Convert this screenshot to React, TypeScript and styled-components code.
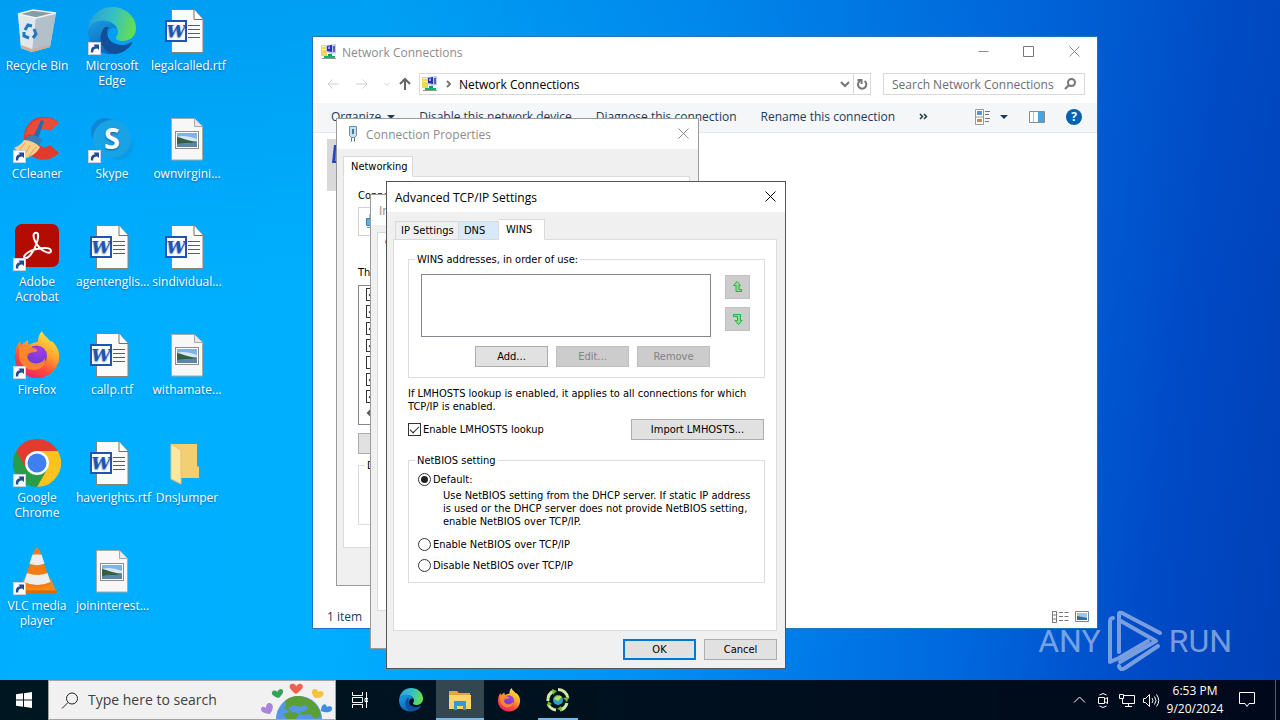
import React from "react";
import styled, { createGlobalStyle, css } from "styled-components";

const SHELL = `"Open Sans", "Noto Sans", sans-serif`;
const DIALOG = `"DejaVu Sans Condensed", "DejaVu Sans", sans-serif`;

const GlobalStyle = createGlobalStyle`
  *, *::before, *::after { box-sizing: border-box; }
  body { margin: 0; font: 12px/15px ${SHELL}; color: #000; }
  button, input { font: inherit; color: inherit; margin: 0; }
  svg { display: block; flex: none; }
`;

/* ---------- Desktop ---------- */

const Screen = styled.div`
  display: flex;
  flex-direction: column;
  height: 100vh;
  overflow: hidden;
`;

const Desktop = styled.main`
  position: relative;
  flex: 1;
  min-height: 0;
  overflow: hidden;
  background:
    linear-gradient(180deg, rgba(0, 84, 190, 0.18) 0%, rgba(0, 90, 200, 0) 45%),
    linear-gradient(97deg, #00aeff 0%, #00b0ff 28%, #0092f5 52%, #0068de 76%, #004ac6 90%, #0040b6 100%);
`;

const IconGrid = styled.ul`
  display: grid;
  grid-auto-flow: column;
  grid-template-rows: repeat(6, 108px);
  grid-auto-columns: 75px;
  width: max-content;
  margin: 0;
  padding: 0;
  list-style: none;
`;

const Shortcut = styled.button`
  display: flex;
  flex-direction: column;
  align-items: center;
  gap: 3px;
  width: 100%;
  padding: 7px 1px 0 0;
  border: 0;
  background: none;
  color: #fff;
  text-align: center;
  text-shadow: 0 1px 2px rgba(0, 50, 110, 0.6);
`;

const ShortcutLabel = styled.span`
  max-width: 72px;
`;

const Brand = styled.div`
  position: absolute;
  right: 48px;
  bottom: 6px;
  display: flex;
  align-items: center;
  gap: 6px;
  color: rgba(200, 214, 238, 0.6);
  font: 32px/66px Roboto, "Liberation Sans", sans-serif;
  pointer-events: none;
`;

/* ---------- Windows ---------- */

const Frame = styled.section<{ $x: number; $y: number; $w: number; $h: number; $edge: string; $dialog?: boolean }>`
  position: absolute;
  isolation: isolate;
  left: ${(p) => p.$x}px;
  top: ${(p) => p.$y}px;
  width: ${(p) => p.$w}px;
  height: ${(p) => p.$h}px;
  display: flex;
  flex-direction: column;
  border: 1px solid ${(p) => p.$edge};
  background: #fff;
  ${(p) =>
    p.$dialog &&
    css`
      background: #f0f0f0;
      font: 11px/13px ${DIALOG};
    `}
`;

const TitleBar = styled.header<{ $active?: boolean }>`
  display: flex;
  align-items: center;
  flex: none;
  gap: 5px;
  height: 30px;
  padding-left: 8px;
  background: #fff;
  color: ${(p) => (p.$active ? "#000" : "#8c8c8c")};
  font: 12px/15px ${SHELL};
`;

const Title = styled.h2`
  flex: 1;
  margin: 0;
  font: inherit;
  white-space: nowrap;
`;

const CaptionButtons = styled.div`
  display: flex;
`;

const CaptionButton = styled.button<{ $w: number }>`
  display: grid;
  place-items: center;
  width: ${(p) => p.$w}px;
  height: 30px;
  padding: 0 0 2px;
  border: 0;
  background: none;
`;

const AddressRow = styled.div`
  display: flex;
  align-items: center;
  flex: none;
  height: 36px;
  padding: 0 12px 2px 13px;
`;

const NavButton = styled.button<{ $w: number }>`
  display: grid;
  place-items: center;
  width: ${(p) => p.$w}px;
  height: 20px;
  padding: 0;
  border: 0;
  background: none;
`;

const AddressBox = styled.div`
  display: flex;
  align-items: center;
  flex: 1;
  height: 22px;
  margin-right: 12px;
  padding-left: 2px;
  border: 1px solid #d9d9d9;
`;

const Crumb = styled.button`
  flex: 1;
  padding: 0;
  border: 0;
  background: none;
  text-align: left;
`;

const RefreshButton = styled(NavButton)`
  border-left: 1px solid #d9d9d9;
`;

const SearchBox = styled.label`
  display: flex;
  align-items: center;
  width: 202px;
  height: 22px;
  padding: 0 8px;
  border: 1px solid #d9d9d9;
`;

const SearchInput = styled.input`
  flex: 1;
  min-width: 0;
  padding: 0;
  border: 0;
  outline: 0;
  background: none;
  &::placeholder { color: #6d6d6d; opacity: 1; }
`;

const CommandBar = styled.div`
  display: flex;
  align-items: center;
  flex: none;
  gap: 24px;
  height: 30px;
  padding: 0 15px 2px 18px;
  border-bottom: 1px solid #e8e8ea;
  background: #f5f6f7;
`;

const Command = styled.button`
  display: flex;
  align-items: center;
  gap: 6px;
  padding: 0;
  border: 0;
  background: none;
  color: #1e395b;
  white-space: nowrap;
`;

const CommandTools = styled.div`
  display: flex;
  align-items: center;
  gap: 21px;
  margin-left: auto;
`;

const FileArea = styled.div`
  flex: 1;
  padding: 6px 14px;
`;

const ConnectionItem = styled.button`
  display: flex;
  width: 240px;
  height: 52px;
  padding: 6px 4px;
  border: 0;
  background: #d9d9d9;
`;

const StatusBar = styled.footer`
  display: flex;
  align-items: center;
  justify-content: space-between;
  height: 23px;
  padding: 0 8px 0 14px;
  color: #1e395b;
`;

const ViewButtons = styled.div`
  display: flex;
`;

/* ---------- Dialog parts ---------- */

const DialogBody = styled.div<{ $pad: string }>`
  display: flex;
  flex-direction: column;
  flex: 1;
  min-height: 0;
  padding: ${(p) => p.$pad};
`;

const TabList = styled.div<{ $indent?: boolean }>`
  position: relative;
  z-index: 1;
  display: flex;
  align-items: flex-end;
  flex: none;
  height: 21px;
  margin-bottom: -1px;
  padding-left: ${(p) => (p.$indent ? 2 : 0)}px;
`;

const Tab = styled.button<{ $selected?: boolean; $hot?: boolean; $w: number }>`
  width: ${(p) => p.$w}px;
  height: ${(p) => (p.$selected ? 21 : 19)}px;
  padding: 0 0 0 ${(p) => (p.$selected ? 7 : 5)}px;
  border: 1px solid #d9d9d9;
  border-bottom-color: ${(p) => (p.$selected ? "#fff" : "#d9d9d9")};
  background: ${(p) => (p.$selected ? "#fff" : p.$hot ? "#d8eaf9" : "#f0f0f0")};
  text-align: left;
  white-space: nowrap;
  & + & { border-left-width: 0; }
`;

const Page = styled.div<{ $pad: string }>`
  display: flex;
  flex-direction: column;
  flex: 1;
  min-height: 0;
  padding: ${(p) => p.$pad};
  border: 1px solid #dcdcdc;
  background: #fff;
`;

const Group = styled.fieldset<{ $pad: string }>`
  min-width: 0;
  margin: 0;
  padding: ${(p) => p.$pad};
  border: 1px solid #dcdcdc;
`;

const Legend = styled.legend`
  padding: 0 2px;
`;

const AddressesRow = styled.div`
  display: flex;
  gap: 14px;
  padding: 0 8px 0 6px;
`;

const ListBox = styled.div<{ $h: number }>`
  flex: 1;
  height: ${(p) => p.$h}px;
  border: 1px solid #828790;
  background: #fff;
`;

const ArrowStack = styled.div`
  display: flex;
  flex-direction: column;
  gap: 8px;
  padding-top: 1px;
`;

const ArrowButton = styled.button`
  display: grid;
  place-items: center;
  width: 25px;
  height: 24px;
  padding: 0;
  border: 1px solid #bfbfbf;
  background: #ccc;
`;

const ButtonRow = styled.div<{ $pad: string }>`
  display: flex;
  justify-content: flex-end;
  flex: none;
  gap: 8px;
  padding: ${(p) => p.$pad};
`;

const PushButton = styled.button<{ $w: number; $primary?: boolean }>`
  width: ${(p) => p.$w}px;
  height: 21px;
  padding: 0;
  border: ${(p) => (p.$primary ? "2px solid #0078d7" : "1px solid #adadad")};
  background: #e1e1e1;
  text-align: center;
  &:disabled {
    border-color: #bfbfbf;
    background: #ccc;
    color: #838383;
  }
`;

const Paragraph = styled.p`
  margin: 0;
`;

const LookupNote = styled(Paragraph)`
  padding-top: 9px;
`;

const SplitRow = styled.div`
  display: flex;
  align-items: center;
  justify-content: space-between;
  padding: 6px 1px 14px 0;
`;

const Choice = styled.label`
  display: flex;
  align-items: center;
  gap: 2px;
`;

const CheckBox = styled.input`
  appearance: none;
  display: grid;
  place-items: center;
  flex: none;
  width: 13px;
  height: 13px;
  border: 1px solid #333;
  background: #fff;
  &:checked::before {
    content: "";
    width: 9px;
    height: 5px;
    border: solid #222;
    border-width: 0 0 1px 1px;
    transform: translateY(-1px) rotate(-45deg);
  }
`;

const BoldCheckBox = styled(CheckBox)`
  &:checked::before {
    width: 7px;
    height: 4px;
    border-width: 0 0 2px 2px;
  }
`;

const Radio = styled.input`
  appearance: none;
  display: grid;
  place-items: center;
  flex: none;
  width: 13px;
  height: 13px;
  border: 1px solid #333;
  border-radius: 50%;
  background: #fff;
  &:checked::before {
    content: "";
    width: 7px;
    height: 7px;
    border-radius: 50%;
    background: #222;
  }
`;

const RadioHelp = styled.p`
  margin: 3px 0 10px 25px;
  white-space: nowrap;
`;

const RadioStack = styled.div`
  display: flex;
  flex-direction: column;
  gap: 8px;
`;

const RadioSet = styled.div`
  padding-left: 3px;
`;

const AdapterBox = styled.div`
  height: 29px;
  margin: 5px 0 30px;
  padding: 4px 7px;
  border: 1px solid #d0d0d0;
`;

const ItemList = styled.div`
  display: flex;
  flex-direction: column;
  gap: 4px;
  height: 140px;
  margin: 6px 0 8px;
  padding: 2px 7px;
  border: 1px solid #828790;
`;

/* ---------- Taskbar ---------- */

const Taskbar = styled.footer`
  display: flex;
  align-items: stretch;
  flex: none;
  height: 40px;
  background: linear-gradient(90deg, #001722, #000d1c 75%, #00091c);
  color: #fff;
`;

const TaskSearch = styled.label`
  display: flex;
  align-items: center;
  gap: 10px;
  width: 288px;
  padding-left: 12px;
  border: 1px solid #a0a4a6;
  background: #f1f1f1;
  color: #222;
  font: 14px/20px ${SHELL};
`;

const TaskSearchInput = styled(SearchInput)`
  &::placeholder { color: #404040; opacity: 1; }
`;

const AppButtons = styled.div`
  display: flex;
  gap: 1px;
  margin-left: 3px;
`;

const TaskButton = styled.button<{ $active?: boolean; $running?: boolean }>`
  display: flex;
  flex-direction: column;
  align-items: center;
  justify-content: center;
  width: 48px;
  padding: 0;
  border: 0;
  background: ${(p) => (p.$active ? "#34464f" : "none")};
  box-shadow: ${(p) => (p.$active ? "inset 0 -2px #76b9ed" : "none")};
  ${(p) =>
    p.$running &&
    css`
      background: linear-gradient(#76b9ed, #76b9ed) center bottom / 40px 2px no-repeat;
    `}
`;

const Tray = styled.div`
  display: flex;
  align-items: center;
  margin-left: auto;
`;

const TrayButton = styled.button<{ $w: number }>`
  display: grid;
  place-items: center;
  width: ${(p) => p.$w}px;
  height: 40px;
  padding: 0;
  border: 0;
  background: none;
`;

const Clock = styled.time`
  width: 64px;
  text-align: center;
  line-height: 18px;
`;

const ShowDesktop = styled.button`
  width: 5px;
  height: 40px;
  margin-left: 8px;
  padding: 0;
  border: 0;
  border-left: 1px solid #56606a;
  background: none;
`;

/* ---------- Drawings ---------- */

const ShortcutArrow = () => (
  <g>
    <rect x="0.500" y="35.500" width="12" height="12" fill="#fff" stroke="#c9d3df" />
    <path d="M3 45.500c-.6-4 1.200-6.200 4-6.300L5.500 37.500H11V43L9.300 41.500C6.700 41.400 5 42.800 5.200 45.500Z" fill="#244a8f" />
  </g>
);

const Art = ({ children, link }: { children: React.ReactNode; link?: boolean }) => (
  <svg width="48" height="48" viewBox="0 0 48 48" aria-hidden="true">
    {children}
    {link && <ShortcutArrow />}
  </svg>
);

const EdgeShape = () => (
  <g>
    <defs>
      <linearGradient id="edgeTop" x1="0" y1=".3" x2="1" y2=".5">
        <stop offset="0" stopColor="#2c9fd9" />
        <stop offset=".5" stopColor="#35c1c4" />
        <stop offset="1" stopColor="#66e04b" />
      </linearGradient>
      <linearGradient id="edgeLeft" x1="0" y1="0" x2=".6" y2="1">
        <stop offset="0" stopColor="#1b9de2" />
        <stop offset="1" stopColor="#0a62bb" />
      </linearGradient>
    </defs>
    <path d="M.5 22C2 9 11.500 0 24 0c14 0 24 10 24 21 0 8-6 13-13 13-5 0-7.500-2-7-4 .3-1 2-2 2-5 0-6-6-11-14-11C8 14 3 17 .5 22Z" fill="url(#edgeTop)" />
    <path d="M0 24C1.500 17.500 8 13.500 15 13.500c7 0 12 4 14 8-4-2-9 0-9 7 0 9 7 15 15 13-4 4-8 5.500-12 5.500C10 47 0 38 0 24Z" fill="url(#edgeLeft)" />
    <path d="M17 20c-3 3-4.500 7-4.500 11 0 8 6 15 14 16 8-.5 14-5 17.500-10.500.6-1-.3-1.600-1.200-1.100C40 37 37 38 34 38c-8 0-15-5-15-12 0-3 .8-4.500 2-6Z" fill="#124f9b" />
  </g>
);

const FirefoxShape = () => (
  <g>
    <defs>
      <linearGradient id="foxBody" x1=".8" y1="0" x2=".25" y2="1">
        <stop offset="0" stopColor="#fff04a" />
        <stop offset=".4" stopColor="#ffa42b" />
        <stop offset=".7" stopColor="#ff4a3d" />
        <stop offset="1" stopColor="#e81e6e" />
      </linearGradient>
      <radialGradient id="foxGlobe" cx=".6" cy=".2" r=".9">
        <stop offset="0" stopColor="#a63ee0" />
        <stop offset="1" stopColor="#5b3bd0" />
      </radialGradient>
    </defs>
    <path d="M29 0c1 4 6 7 9 11l1-1c5 5 8 11 7 18C45 39 35 47 24 47S3 39 2 28c-.5-7 1-13 5-18l1 4 7-5c0 2 0 4 1 5 3-2 6-3 9-3 0-4 1-8 4-11Z" fill="url(#foxBody)" />
    <circle cx="23.500" cy="25" r="10.500" fill="url(#foxGlobe)" />
    <path d="M6 16c4-3 8-2 10-1l7 3c2 1 1 3-1 3l-5 1c-4 2-3 7 1 9 5 3 12 1 14-4 1 8-5 12-11 12-8 0-14-6-15-13Z" fill="#ff8a2b" opacity=".9" />
  </g>
);

const RecycleArt = () => (
  <Art>
    <path d="M5 7 20 3l23 3-6 34-18 5-11-4Z" fill="#c2d0d9" />
    <path d="m5 7 18 4-4 34-11-4Z" fill="#e1e7ea" />
    <path d="m23 11 20-5-6 34-18 5Z" fill="#b3c0c9" />
    <path d="M5 7 20 3l23 3-20 5Z" fill="#8c9aa5" stroke="#eef3f6" strokeWidth="1.500" />
    <path d="m8 38 11 4 18-4v2l-18 5-11-4Z" fill="#cfae9a" />
    <path d="m12 23 3-5 4 1m2 3 2 5-3 4m-4 0-5-2v-4" fill="none" stroke="#1d78c8" strokeWidth="3" />
  </Art>
);

const EdgeArt = () => <Art link><EdgeShape /></Art>;
const FirefoxArt = () => <Art link><FirefoxShape /></Art>;

const WordArt = () => (
  <Art>
    <path d="M8.500 2.500h22.500l9 10V45.500H8.500Z" fill="#fbfbfb" stroke="#8c8177" />
    <path d="M31 2.500v10h9" fill="#fff" stroke="#7d6e62" />
    <path d="M25 18.500h12M25 22.500h12M25 26.500h12M25 30.500h12" stroke="#2f63b5" />
    <rect x="3" y="14" width="20" height="20" fill="#fff" stroke="#1d55b3" strokeWidth="2" />
    <text x="13" y="30" textAnchor="middle" fontFamily="'DejaVu Serif'" fontWeight="bold" fontStyle="italic" fontSize="17" fill="#1d55b3">W</text>
  </Art>
);

const PictureArt = () => (
  <Art>
    <path d="M8.500 3.500h23l8 8v33.500h-31Z" fill="#f7f7f7" stroke="#a8a8a8" />
    <path d="M31.500 3.500v8h8" fill="#e8e8e8" stroke="#a8a8a8" />
    <rect x="12.500" y="16.500" width="23" height="17" fill="#fff" stroke="#8d8d8d" />
    <rect x="14" y="18" width="20" height="14" fill="#7fb2e6" />
    <path d="M14 22q7-3 20 2v3H14Z" fill="#d7e8f4" />
    <path d="M14 22c4 0 8 4 20 4.500v1L14 29Z" fill="#355e44" />
    <path d="M14 29 34 27.500V32H14Z" fill="#5b86a6" />
  </Art>
);

const CCleanerArt = () => (
  <Art link>
    <path d="M46 8 37 16c-6-5-13-1-13 7s7 12 13 7l9 8c-12 12-32 7-35-9C9 11 20 1 31 2c6 0 12 2 15 6Z" fill="#e23b2b" />
    <path d="M46 8 37 16c-6-5-13-1-13 7-5-6-9-3-12-2C14 6 32-4 46 8Z" fill="#f0604a" opacity=".5" />
    <path d="m28 5 3 1-6 18-5-2Z" fill="#2b6aa8" />
    <path d="M13 23c5-4 12-3 16 2l-4 7-15-5Z" fill="#3b7cb8" />
    <path d="M11 25c6 0 12 3 16 7-3 6-8 9-14 11L1 33c4-2 8-4 10-8Z" fill="#f6cf8b" />
    <path d="m12 28-6 8m11-6-6 11m12-9-7 9" stroke="#dba75b" />
  </Art>
);

const SkypeArt = () => (
  <Art link>
    <circle cx="17" cy="17" r="14" fill="#1086d6" />
    <circle cx="31" cy="31" r="14" fill="#0a9be6" />
    <circle cx="24" cy="24" r="19" fill="#18a3e6" />
    <text x="24" y="34" textAnchor="middle" fontFamily="Open Sans" fontWeight="bold" fontSize="29" fill="#fff">S</text>
  </Art>
);

const AcrobatArt = () => (
  <Art link>
    <rect x="2" y="1" width="44" height="43" rx="7" fill="#b30b00" />
    <path d="M22 10c4-2 4 5 1 12-3 8-8 14-11 13s2-7 12-9c9-2 14-1 14 2s-7 2-12-4c-5-5-7-13-4-14Z" fill="none" stroke="#fff" strokeWidth="2" />
  </Art>
);

const ChromeArt = () => (
  <Art link>
    <path d="M24 24 3.200 12A24 24 0 0 1 44.800 12Z" fill="#e33b2e" />
    <path d="M24 24 44.800 12A24 24 0 0 1 24 48Z" fill="#fcc31e" />
    <path d="M24 24 24 48A24 24 0 0 1 3.200 12Z" fill="#2a9b47" />
    <path d="M24 12h20.800L34.400 30Z" fill="#fcc31e" />
    <path d="M13.600 30 3.200 12 24 12Z" fill="#e33b2e" />
    <path d="M34.400 30 24 48 13.600 30Z" fill="#2a9b47" />
    <circle cx="24" cy="24" r="12" fill="#fff" />
    <circle cx="24" cy="24" r="9.500" fill="#3f7ff0" />
  </Art>
);

const VlcArt = () => (
  <Art link>
    <path d="M11 32h27l6 14H5Z" fill="#f58a1a" />
    <path d="M5 43.500h39V46H5Z" fill="#d96a05" />
    <path d="M22 2q2-2 4 0l12 35q-14 8-28 0Z" fill="#f47c14" />
    <path d="m19 9 .5-1.500h9l3 9q-7.500 3.500-15 0ZM14 26q10 4 20.500 0l3 9q-13 6-26.500 0Z" fill="#eeeeee" />
  </Art>
);

const FolderArt = () => (
  <Art>
    <path d="M9 5h25v22l2 1v11H9Z" fill="#f3cf73" />
    <path d="M8 5 18 11v34L8 40Z" fill="#fbe6a2" stroke="#e6c373" />
  </Art>
);

const NetworkArt = () => (
  <svg width="16" height="16" viewBox="0 0 16 16" aria-hidden="true">
    <path d="M0 1h6v11H0Z" fill="#efd94f" />
    <path d="M1 2h4v1H1ZM1 5h4v1H1Z" fill="#fff7b8" />
    <path d="M5 1 15 0v9l-5 1-5-2Z" fill="#c3cae6" />
    <path d="M6 2l5-1v7l-5-1Z" fill="#2330b8" />
    <path d="M7 3l2-1v3H7Z" fill="#9aa6f0" />
    <path d="M12 2h2v6h-2Z" fill="#5c6698" />
    <path d="M7 10h4v2H7Z" fill="#0a9c62" />
    <path d="M3 12h11v2H3Z" fill="#14b36b" />
    <path d="M1 14h14v1H1Z" fill="#8c9a96" />
  </svg>
);

const CrossMark = ({ color }: { color: string }) => (
  <svg width="11" height="11" viewBox="0 0 11 11" aria-hidden="true">
    <path d="M.5.5l10 10M10.500.5l-10 10" stroke={color} />
  </svg>
);

const LineArt = ({ d, w = 16, h = 16, color = "#fff", stroke = 1 }: { d: string; w?: number; h?: number; color?: string; stroke?: number }) => (
  <svg width={w} height={h} viewBox={`0 0 ${w} ${h}`} fill="none" stroke={color} strokeWidth={stroke} aria-hidden="true">
    <path d={d} />
  </svg>
);

const Caret = () => (
  <svg width="8" height="4" viewBox="0 0 8 4" aria-hidden="true"><path d="M0 0h8L4 4Z" fill="#1e395b" /></svg>
);

const Globe = () => (
  <svg width="76" height="38" viewBox="0 0 76 38" aria-hidden="true">
    <g transform="translate(2 1)">
      <circle cx="38" cy="37" r="23" fill="#5596e8" />
      <path d="M24 19c5-5 13-6 19-4l7 3c6 5 9 10 10 16l-6 3-5-5-8 1-4-5-8 2-6-4 2-3Z" fill="#5a9f35" />
      <path d="M22 32l10-3 6 3-3 5H26Z" fill="#5a9f35" />
      <path d="M27 26l6-3 5 2 7-2 2 4-5 3-6-1-4 2Z" fill="#5596e8" />
      <path d="M35 12c-6-4-8-8-5-10 3-1 5 1 5 2s2-3 5-2c4 2 1 6-5 10Z" fill="#f0604d" />
      <path d="M18 16c-6-1-9-5-6-7 2-1 4 0 4 1s1-3 4-3c4 1 2 5-2 9Z" fill="#35a35a" />
      <path d="M54 16c-4-4-4-9 0-9 3 0 3 3 3 3s3-2 5 0c2 4-2 6-8 6Z" fill="#f6c33c" />
      <path d="M9 32c-7 0-11-4-8-7 2-1 4 1 4 1s0-5 3-5c5 0 5 6 1 11Z" fill="#a884dc" />
      <path d="M60 29c0-5 3-8 5-6l1 2s4-2 5 1c1 3-4 6-11 3Z" fill="#3d8de0" />
    </g>
  </svg>
);

/* ---------- Data ---------- */

const shortcuts: { label: string; Icon: React.FC }[] = [
  { label: "Recycle Bin", Icon: RecycleArt },
  { label: "CCleaner", Icon: CCleanerArt },
  { label: "Adobe Acrobat", Icon: AcrobatArt },
  { label: "Firefox", Icon: FirefoxArt },
  { label: "Google Chrome", Icon: ChromeArt },
  { label: "VLC media player", Icon: VlcArt },
  { label: "Microsoft Edge", Icon: EdgeArt },
  { label: "Skype", Icon: SkypeArt },
  { label: "agentenglis...", Icon: WordArt },
  { label: "callp.rtf", Icon: WordArt },
  { label: "haverights.rtf", Icon: WordArt },
  { label: "joininterest...", Icon: PictureArt },
  { label: "legalcalled.rtf", Icon: WordArt },
  { label: "ownvirgini...", Icon: PictureArt },
  { label: "sindividual...", Icon: WordArt },
  { label: "withamate...", Icon: PictureArt },
  { label: "DnsJumper", Icon: FolderArt },
];

const adapterItems = [true, true, true, true, false, true, true];

/* ---------- Windows ---------- */

const ExplorerWindow = () => (
  <Frame $x={312} $y={36} $w={786} $h={593} $edge="#1e73be">
    <TitleBar>
      <NetworkArt />
      <Title>Network Connections</Title>
      <CaptionButtons>
        <CaptionButton $w={45} aria-label="Minimize"><LineArt d="M.5 5.500h10" w={11} h={11} color="#8c8c8c" /></CaptionButton>
        <CaptionButton $w={45} aria-label="Maximize"><LineArt d="M.5.5h10v10H.5Z" w={11} h={11} color="#777" /></CaptionButton>
        <CaptionButton $w={46} aria-label="Close"><CrossMark color="#8c8c8c" /></CaptionButton>
      </CaptionButtons>
    </TitleBar>
    <AddressRow>
      <NavButton $w={14} aria-label="Back"><LineArt d="M13 7H2M6.500 2.500 2 7l4.500 4.500" w={14} h={14} color="#d0d0d0" /></NavButton>
      <NavButton $w={44} aria-label="Forward"><LineArt d="M1 7h11M7.500 2.500 12 7l-4.500 4.500" w={14} h={14} color="#d0d0d0" /></NavButton>
      <NavButton $w={6} aria-label="Recent locations"><LineArt d="M.5 1 3 3.500 5.500 1" w={6} h={5} color="#ccc" /></NavButton>
      <NavButton $w={29} aria-label="Up"><LineArt d="M7 13V2M2 7l5-5 5 5" w={14} h={14} color="#666" stroke={2} /></NavButton>
      <AddressBox>
        <NetworkArt />
        <NavButton $w={21} aria-label="Show folders"><LineArt d="M1 1l3 3-3 3" w={5} h={8} color="#777" stroke={2} /></NavButton>
        <Crumb>Network Connections</Crumb>
        <NavButton $w={17} aria-label="Previous locations"><LineArt d="M1 1l4 4 4-4" w={10} h={7} color="#777" stroke={2} /></NavButton>
        <RefreshButton $w={17} aria-label="Refresh">
          <LineArt d="M8.500 3A4.200 4.200 0 1 1 3.800 3M1.500 2H5.500V6" w={12} h={12} color="#777" stroke={2} />
        </RefreshButton>
      </AddressBox>
      <SearchBox>
        <SearchInput placeholder="Search Network Connections" aria-label="Search Network Connections" />
        <LineArt d="M11 4.500a3.500 3.500 0 1 1-7 0 3.500 3.500 0 0 1 7 0ZM5 7 1 11" w={12} h={12} color="#777" stroke={2} />
      </SearchBox>
    </AddressRow>
    <CommandBar>
      <Command>Organize <Caret /></Command>
      <Command>Disable this network device</Command>
      <Command>Diagnose this connection</Command>
      <Command>Rename this connection</Command>
      <Command aria-label="More commands"><LineArt d="M1 1l2.500 2.500L1 6M5 1l2.500 2.500L5 6" w={9} h={7} color="#1e395b" stroke={1.5} /></Command>
      <CommandTools>
        <Command aria-label="Change your view">
          <svg width="19" height="16" viewBox="0 0 19 16" aria-hidden="true">
            <path d="M.5.5h8v15h-8ZM.5 8h8" fill="#fff" stroke="#9a9a9a" />
            <path d="M2 2h5v4H2Z" fill="#5b93cf" />
            <path d="M2 10h5v3H2Z" fill="#c98d4b" />
            <path d="M10 2.500h5M10 5.500h4M10 9.500h5M10 12.500h4" stroke="#777" />
          </svg>
          <Caret />
        </Command>
        <Command aria-label="Preview pane">
          <svg width="16" height="12" viewBox="0 0 16 12" aria-hidden="true">
            <path d="M.5.5h15v11H.5Z" fill="#fff" stroke="#8a8a8a" />
            <path d="M9 1h6v10H9Z" fill="#4aa3e0" />
            <path d="M4.500 1v10" stroke="#bbb" />
          </svg>
        </Command>
        <Command aria-label="Help">
          <svg width="16" height="16" viewBox="0 0 16 16" aria-hidden="true">
            <circle cx="8" cy="8" r="8" fill="#0063b1" />
            <text x="8" y="12" textAnchor="middle" fontFamily="Open Sans" fontWeight="bold" fontSize="12" fill="#fff">?</text>
          </svg>
        </Command>
      </CommandTools>
    </CommandBar>
    <FileArea>
      <ConnectionItem aria-label="Ethernet adapter">
        <svg width="32" height="26" viewBox="0 0 32 26" aria-hidden="true">
          <path d="M3 0h20l-2 18H1Z" fill="#2740c4" />
          <path d="M5 2h16l-2 14H4Z" fill="#6c8cf0" />
        </svg>
      </ConnectionItem>
    </FileArea>
    <StatusBar>
      <span>1 item</span>
      <ViewButtons>
        <Command aria-label="Details view">
          <LineArt d="M.5.5h4v11h-4ZM.5 4h4M.5 8h4M7 1.500h4M7 5.500h4M7 9.500h4M12.500 1.500h4M12.500 5.500h4M12.500 9.500h4" w={23} h={12} color="#777" />
        </Command>
        <Command aria-label="Large icons view">
          <svg width="14" height="12" viewBox="0 0 14 12" aria-hidden="true">
            <path d="M.5.5h13v10H.5Z" fill="#fff" stroke="#5d8dbd" />
            <path d="M2 2h10v7H2Z" fill="#9cc5ea" />
            <path d="M2 5l10 2v2H2Z" fill="#2c6aa0" />
          </svg>
        </Command>
      </ViewButtons>
    </StatusBar>
  </Frame>
);

const ConnectionProperties = () => (
  <Frame $x={336} $y={118} $w={363} $h={468} $edge="#9a9a9a" $dialog>
    <TitleBar>
      <svg width="16" height="16" viewBox="0 0 16 16" aria-hidden="true">
        <path d="M4.500.5h7v9l-2 2h-3l-2-2Z" fill="#c7dff0" stroke="#6b90a8" />
        <path d="M7 3h2v5H7Z" fill="#3c78a8" />
        <path d="M6.500 11.500v4M9.500 11.500v4" stroke="#4b7898" />
      </svg>
      <Title>Connection Properties</Title>
      <CaptionButton $w={30} aria-label="Close"><CrossMark color="#8c8c8c" /></CaptionButton>
    </TitleBar>
    <DialogBody $pad="7px 8px 37px 6px">
      <TabList><Tab $selected $w={70}>Networking</Tab></TabList>
      <Page $pad="12px 14px">
        <Paragraph>Connect using:</Paragraph>
        <AdapterBox>
          <svg width="18" height="18" viewBox="0 0 18 18" aria-hidden="true">
            <path d="M4 2h12v9H4Z" fill="#9fd0f0" stroke="#2f7fb8" />
            <path d="M.5 6.500h7v7h-7Z" fill="#5cb3e8" stroke="#2f7fb8" />
            <path d="M1 15.500h8" stroke="#5a9c6a" />
          </svg>
        </AdapterBox>
        <Paragraph>This connection uses the following items:</Paragraph>
        <ItemList>
          {adapterItems.map((on, i) => (
            <BoldCheckBox key={i} type="checkbox" defaultChecked={on} aria-label={`Network component ${i + 1}`} />
          ))}
          <LineArt d="M6 2 2 6l4 4" w={8} h={12} color="#555" stroke={2} />
        </ItemList>
        <ButtonRow $pad="0 0 5px"><PushButton $w={317} aria-label="Install" /></ButtonRow>
        <Group $pad="0 6px 52px"><Legend>Description</Legend></Group>
      </Page>
    </DialogBody>
  </Frame>
);

const ProtocolProperties = () => (
  <Frame $x={370} $y={194} $w={399} $h={455} $edge="#9a9a9a" $dialog>
    <TitleBar><Title>Internet Protocol</Title></TitleBar>
    <DialogBody $pad="7px 8px 37px 6px">
      <TabList><Tab $selected $w={54}>General</Tab></TabList>
      <Page $pad="0" />
    </DialogBody>
  </Frame>
);

const AdvancedSettings = () => (
  <Frame $x={386} $y={181} $w={400} $h={488} $edge="#555" $dialog>
    <TitleBar $active>
      <Title>Advanced TCP/IP Settings</Title>
      <CaptionButton $w={30} aria-label="Close"><CrossMark color="#000" /></CaptionButton>
    </TitleBar>
    <DialogBody $pad="7px 8px 0 6px">
      <TabList $indent role="tablist">
        <Tab role="tab" $w={64}>IP Settings</Tab>
        <Tab role="tab" $hot $w={40}>DNS</Tab>
        <Tab role="tab" aria-selected $selected $w={46}>WINS</Tab>
      </TabList>
      <Page $pad="13px 11px 0 14px">
        <Group $pad="8px 6px 10px">
          <Legend>WINS addresses, in order of use:</Legend>
          <AddressesRow>
            <ListBox $h={63} role="listbox" aria-label="WINS addresses" />
            <ArrowStack>
              <ArrowButton disabled aria-label="Move up">
                <svg width="11" height="12" viewBox="0 0 11 12" aria-hidden="true">
                  <path d="M5 .5 1.500 4.500H4V10.500h5.500V8.500H7V4.500h1.500Z" fill="#8fdc8f" stroke="#2fae46" />
                </svg>
              </ArrowButton>
              <ArrowButton disabled aria-label="Move down">
                <svg width="11" height="12" viewBox="0 0 11 12" aria-hidden="true">
                  <path d="M6.500 11.500 3 7.500h2.500V3.500h-4V1.500H8.500V7.500H10Z" fill="#8fdc8f" stroke="#2fae46" />
                </svg>
              </ArrowButton>
            </ArrowStack>
          </AddressesRow>
          <ButtonRow $pad="9px 48px 0 0">
            <PushButton $w={73}>Add...</PushButton>
            <PushButton $w={73} disabled>Edit...</PushButton>
            <PushButton $w={73} disabled>Remove</PushButton>
          </ButtonRow>
        </Group>
        <LookupNote>
          If LMHOSTS lookup is enabled, it applies to all connections for which
          <br />
          TCP/IP is enabled.
        </LookupNote>
        <SplitRow>
          <Choice><CheckBox type="checkbox" defaultChecked />Enable LMHOSTS lookup</Choice>
          <PushButton $w={133}>Import LMHOSTS...</PushButton>
        </SplitRow>
        <Group $pad="6px 6px 10px">
          <Legend>NetBIOS setting</Legend>
          <RadioSet>
            <Choice><Radio type="radio" name="netbios" defaultChecked />Default:</Choice>
            <RadioHelp>
              Use NetBIOS setting from the DHCP server. If static IP address
              <br />
              is used or the DHCP server does not provide NetBIOS setting,
              <br />
              enable NetBIOS over TCP/IP.
            </RadioHelp>
            <RadioStack>
              <Choice><Radio type="radio" name="netbios" />Enable NetBIOS over TCP/IP</Choice>
              <Choice><Radio type="radio" name="netbios" />Disable NetBIOS over TCP/IP</Choice>
            </RadioStack>
          </RadioSet>
        </Group>
      </Page>
      <ButtonRow $pad="8px 0">
        <PushButton $w={73} $primary>OK</PushButton>
        <PushButton $w={73}>Cancel</PushButton>
      </ButtonRow>
    </DialogBody>
  </Frame>
);

const SystemTaskbar = () => (
  <Taskbar>
    <TrayButton $w={48} aria-label="Start">
      <svg width="16" height="16" viewBox="0 0 16 16" fill="#fff" aria-hidden="true">
        <path d="M0 2.300 7 1.300V7.500H0ZM8 1.200 16 0v7.500H8ZM0 8.500h7v6.200l-7-1ZM8 8.500h8V16l-8-1.200Z" />
      </svg>
    </TrayButton>
    <TaskSearch>
      <LineArt d="M16.500 6.500a5.500 5.500 0 1 1-11 0 5.500 5.500 0 0 1 11 0ZM7 10.500 1 16.500" w={17} h={17} color="#222" />
      <TaskSearchInput placeholder="Type here to search" aria-label="Type here to search" />
      <Globe />
    </TaskSearch>
    <TaskButton aria-label="Task View">
      <LineArt d="M.5 0v3.500h10V0M.5 5.500h10v5H.5ZM.5 16v-3.500h10V16M14.500 0v16M13 6.500h3v3h-3Z" w={16} h={16} />
    </TaskButton>
    <AppButtons>
      <TaskButton aria-label="Microsoft Edge">
        <svg width="24" height="24" viewBox="0 0 48 48" aria-hidden="true"><EdgeShape /></svg>
      </TaskButton>
      <TaskButton $active aria-label="File Explorer">
        <svg width="22" height="19" viewBox="0 0 22 19" aria-hidden="true">
          <path d="M0 0h8l2 2h11v4H0Z" fill="#e8a33a" />
          <path d="M0 4h22v14H0Z" fill="#fbd56a" />
          <path d="M5 10h12v9h-3v-4H8v4H5Z" fill="#3b97d3" />
        </svg>
      </TaskButton>
      <TaskButton aria-label="Firefox">
        <svg width="24" height="24" viewBox="0 0 48 48" aria-hidden="true"><FirefoxShape /></svg>
      </TaskButton>
      <TaskButton $running aria-label="DnsJumper">
        <svg width="24" height="24" viewBox="0 0 24 24" fill="none" aria-hidden="true">
          <circle cx="12" cy="12" r="5" fill="#2ba0c8" />
          <path d="M8 11a5 5 0 0 1 8-2l-4 4Z" fill="#b7e24b" />
          <path d="M2 13A10 10 0 0 1 8 3M12 1.500a10 10 0 0 1 10 9M21 15a10 10 0 0 1-7 7M10 22a10 10 0 0 1-8-6" stroke="#cfe8a4" strokeWidth="3" />
          <path d="m6 1 5 2-4 4ZM23 9l-2 5-4-4ZM16 23l-5-2 4-3ZM1 18l1-5 4 3Z" fill="#6fb52c" />
        </svg>
      </TaskButton>
    </AppButtons>
    <Tray>
      <TrayButton $w={24} aria-label="Show hidden icons"><LineArt d="M1 6.500 6.500 1 12 6.500" w={13} h={8} /></TrayButton>
      <TrayButton $w={24} aria-label="Meet Now">
        <LineArt d="M2.500 5.500h6v6h-6ZM8.500 7.500l3-2v6l-3-2M3.500 3q3.500-3 7 0M3.500 14q3.500 3 7 0" w={14} h={17} />
      </TrayButton>
      <TrayButton $w={24} aria-label="Network">
        <LineArt d="M5 2.500h10.500v8H3.500V6M.5 1.500h4v4h-4ZM9.500 10.500v3M6 13.500h7" w={16} h={15} />
      </TrayButton>
      <TrayButton $w={24} aria-label="Volume">
        <LineArt d="M.5 5.500h2l4-4v12l-4-4h-2ZM9 5q2 2.500 0 5M11.500 3.500q3 4 0 8M13.500 1.500q4.500 6 0 12" w={17} h={15} />
      </TrayButton>
      <Clock>6:53 PM<br />9/20/2024</Clock>
      <TrayButton $w={40} aria-label="Notifications"><LineArt d="M.5.5h15v11h-5.500l-2 3-2-3H.5Z" w={16} h={16} /></TrayButton>
      <ShowDesktop aria-label="Show desktop" />
    </Tray>
  </Taskbar>
);

export default function App() {
  return (
    <Screen>
      <GlobalStyle />
      <Desktop>
        <IconGrid>
          {shortcuts.map(({ label, Icon }) => (
            <li key={label}>
              <Shortcut>
                <Icon />
                <ShortcutLabel>{label}</ShortcutLabel>
              </Shortcut>
            </li>
          ))}
        </IconGrid>
        <ExplorerWindow />
        <ConnectionProperties />
        <ProtocolProperties />
        <AdvancedSettings />
        <Brand>
          <span>ANY</span>
          <svg width="56" height="62" viewBox="0 0 56 62" fill="none" stroke="currentColor" strokeWidth="4" strokeLinejoin="round" strokeLinecap="round" aria-hidden="true">
            <path d="M6 8Q3 8 3 12V52L12 48 41 31" />
            <path d="M12 42V4Q12 2 15 3L53 23M12 10 49 31 13 52M12 56Q13 61 18 58L51 36" />
          </svg>
          <span>RUN</span>
        </Brand>
      </Desktop>
      <SystemTaskbar />
    </Screen>
  );
}
